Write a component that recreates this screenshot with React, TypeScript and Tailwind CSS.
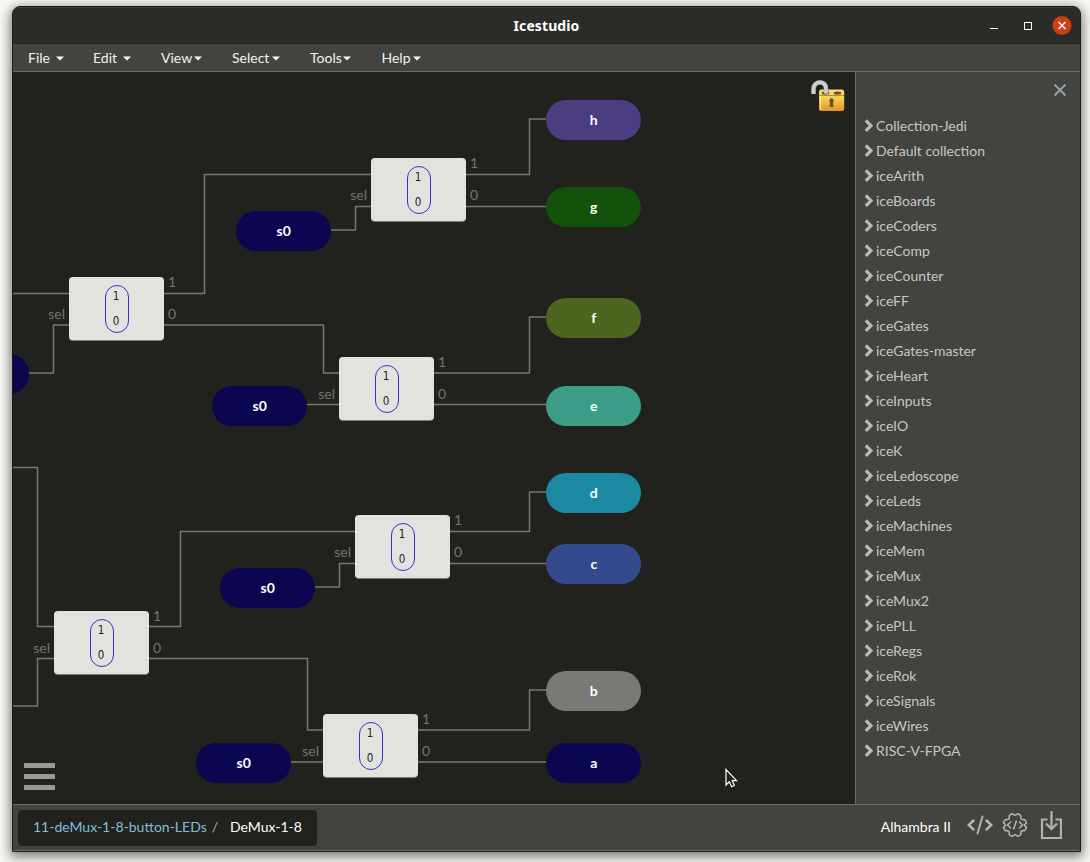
import React from 'react';

const menus = [
  { label: 'File', gap: 'gap-[6px]', width: 'w-[65px]' },
  { label: 'Edit', gap: 'gap-[6px]', width: 'w-[68px]' },
  { label: 'View', gap: 'gap-[2px]', width: 'w-[71px]' },
  { label: 'Select', gap: 'gap-[3px]', width: 'w-[78px]' },
  { label: 'Tools', gap: 'gap-[1px]', width: 'w-[71.5px]' },
  { label: 'Help', gap: 'gap-[2px]', width: 'w-[60px]' },
];

const collections = [
  'Collection-Jedi', 'Default collection', 'iceArith', 'iceBoards', 'iceCoders', 'iceComp', 'iceCounter',
  'iceFF', 'iceGates', 'iceGates-master', 'iceHeart', 'iceInputs', 'iceIO', 'iceK', 'iceLedoscope', 'iceLeds',
  'iceMachines', 'iceMem', 'iceMux', 'iceMux2', 'icePLL', 'iceRegs', 'iceRok', 'iceSignals', 'iceWires', 'RISC-V-FPGA',
];

const wires = [
  'M0 221.5H56',
  'M16 301H40.5V253H56',
  'M151 221.5H191.5V102.5H358',
  'M151 253H310.5V301H326',
  'M318 158H342.5V134.5H358',
  'M453 102.5H516.5V47H533',
  'M453 134.5H533',
  'M294 332.5H326',
  'M421 301H516.5V245H533',
  'M421 332.5H533',
  'M0 395.5H24.5V554.5H41',
  'M0 634H24.5V586.5H41',
  'M136 554.5H167.5V459.5H342',
  'M136 586.5H294.5V658H310',
  'M302 515H326.5V491.5H342',
  'M437 459.5H516.5V420H533',
  'M437 491.5H533',
  'M278 690H310',
  'M405 658H516.5V618H533',
  'M405 690H533',
];

const muxes = [
  { x: 358, y: 86 },
  { x: 56, y: 205 },
  { x: 326, y: 285 },
  { x: 342, y: 443 },
  { x: 41, y: 539 },
  { x: 310, y: 642 },
];

const labels = [
  { text: 'h', x: 533, y: 28, color: 'bg-[#4b3d80]' },
  { text: 'g', x: 533, y: 115, color: 'bg-[#12520b]' },
  { text: 'f', x: 533, y: 226, color: 'bg-[#4c6620]' },
  { text: 'e', x: 533, y: 314, color: 'bg-[#3b9d87]' },
  { text: 'd', x: 533, y: 401, color: 'bg-[#1a89a1]' },
  { text: 'c', x: 533, y: 472, color: 'bg-[#354a8c]' },
  { text: 'b', x: 533, y: 599, color: 'bg-[#797a75]' },
  { text: 'a', x: 533, y: 671, color: 'bg-[#0c0651]' },
  { text: 's0', x: 223, y: 139, color: 'bg-[#0c0651]' },
  { text: 's0', x: 199, y: 314, color: 'bg-[#0c0651]' },
  { text: 's0', x: 207, y: 496, color: 'bg-[#0c0651]' },
  { text: 's0', x: 183, y: 671, color: 'bg-[#0c0651]' },
  { text: '', x: -79, y: 282, color: 'bg-[#0c0651]' },
];

function Mux({ x, y }: { x: number; y: number }) {
  return (
    <div
      className="absolute flex h-[63px] w-[95px] items-center justify-center rounded-[4px] bg-[#e2e3df] shadow-[0_1px_0_#7c7d78]"
      style={{ left: x, top: y }}
    >
      <div className="flex h-[48px] w-[24px] flex-col items-center justify-between rounded-full border border-[#3c2ccb] pb-[4px] pr-[1px] pt-[4px] font-['DejaVu_Sans_Condensed','DejaVu_Sans',sans-serif] text-[11.5px] leading-[13px] text-[#20211d]">
        <span>1</span>
        <span>0</span>
      </div>
      <span className="absolute right-full top-[28px] mr-[4px] text-[14px] leading-[18px] text-[#74756f]">sel</span>
      <span className="absolute left-full top-[-4px] ml-[4px] text-[14px] leading-[18px] text-[#74756f]">1</span>
      <span className="absolute left-full top-[28px] ml-[4px] text-[14px] leading-[18px] text-[#74756f]">0</span>
    </div>
  );
}

function Padlock() {
  return (
    <svg width="36" height="36" viewBox="0 0 36 36">
      <defs>
        <linearGradient id="brass" x1="0" y1="0" x2="0" y2="1">
          <stop offset="0" stopColor="#f3e07a" />
          <stop offset=".45" stopColor="#f6cb48" />
          <stop offset="1" stopColor="#e2932f" />
        </linearGradient>
      </defs>
      <rect x="8" y="9.5" width="25.2" height="21.5" rx="2.5" fill="url(#brass)" />
      <path d="M8.5 15.5H33" stroke="#c08a28" strokeWidth="1" />
      <path d="M9.5 17v13" stroke="#fae58a" strokeWidth="1" />
      <ellipse cx="14.5" cy="13" rx="3.8" ry="1.5" fill="#6d4f1c" />
      <ellipse cx="26.5" cy="13" rx="3.8" ry="1.5" fill="#6d4f1c" />
      <path d="M2.5 14V9.5C2.500 5 5.200 2.400 9 2.400S15 5 15 9v4.500" fill="none" stroke="#8b8c87" strokeWidth="4.8" />
      <path d="M2.5 14V9.5C2.500 5 5.200 2.400 9 2.400S15 5 15 9v4.500" fill="none" stroke="#d0d1ce" strokeWidth="3.6" />
      <path d="M20.5 18.300a2.500 2.500 0 0 0-1.400 4.400l-.7 4.300h4.200l-.7-4.300a2.500 2.500 0 0 0-1.400-4.400z" fill="#725120" />
    </svg>
  );
}

function Gear() {
  return (
    <svg width="26" height="26" viewBox="0 0 26 26" fill="none" stroke="#b2b3af" strokeWidth="1.6" strokeLinejoin="round">
      <path d="M9.500 2C10.500 1 11.700 3.200 13 3.200S15.500 1 16.500 2l2 1.400c.8.6-.4 2.500.7 3.600s3.600.2 4 1.200l1.200 2.300c.5 1-2 1.500-2 2.500s2.500 1.700 2 2.700l-1.200 2.400c-.5 1-3 .1-4 1.200s.1 3-.7 3.600l-2 1.300c-1 .7-2.200-1.400-3.500-1.400S10.500 25 9.500 24.200l-2-1.300c-.8-.6.4-2.500-.7-3.600s-3.500-.2-4-1.200l-1.200-2.400c-.5-1 2-1.700 2-2.700s-2.500-1.500-2-2.500L2.800 8.200c.5-1 2.900-.1 4-1.200s-.1-3 .7-3.600z" />
      <path d="M9 9.500 5.500 13 9 16.500M17 9.500l3.500 3.500-3.500 3.500M14.500 8.500l-3 9" />
    </svg>
  );
}

export default function App() {
  return (
    <div className="flex h-[862px] w-[1090px] overflow-hidden bg-[#f8f8f6] pl-[12px] pt-[6px] font-['Lato',sans-serif]">
      <div className="flex h-[846px] w-[1069px] flex-col overflow-hidden rounded-t-[8px] border border-[#1d1e1a] bg-[#43443f] shadow-[0_3px_12px_2px_rgba(55,57,45,0.65)]">
        <header className="flex h-[37px] shrink-0 items-center border-b border-[#20211d] border-t border-t-[#3b3c37] bg-[#2b2c27]">
          <div className="w-[140px]" />
          <div className="flex-1 text-center font-['Noto_Sans',sans-serif] text-[14px] font-bold leading-[18px] tracking-[0.1px] text-white">
            Icestudio
          </div>
          <div className="flex w-[140px] items-center justify-end pr-[8px]">
            <svg width="84" height="20" viewBox="0 0 84 20" fill="none" className="-mt-[2px]">
              <path d="M2 13.500h8" stroke="#fff" />
              <rect x="36.5" y="7.5" width="7" height="7" stroke="#fff" />
              <circle cx="74" cy="10.500" r="9.500" fill="#d23c17" />
              <path d="m70.500 7 7 7m0-7-7 7" stroke="#fff" strokeWidth="1.500" />
            </svg>
          </div>
        </header>
        <nav className="flex h-[28px] shrink-0 items-center border-b border-[#6b6c67] pl-[15px] text-[14px] leading-[18px] text-[#f2f2f0]">
          {menus.map((menu) => (
            <div key={menu.label} className={`flex shrink-0 items-center ${menu.gap} ${menu.width}`}>
              <span>{menu.label}</span>
              <svg width="8" height="5" viewBox="0 0 8 5" className="mt-[2px] shrink-0">
                <path d="M0 .5h8L4 4.500z" fill="#fff" />
              </svg>
            </div>
          ))}
        </nav>
        <main className="flex h-[732px] shrink-0">
          <section className="relative w-[842px] shrink-0 overflow-hidden bg-[#21221d]">
            <svg width="842" height="732" className="absolute inset-0" fill="none" stroke="#777873" strokeWidth="1.5">
              {wires.map((d) => <path key={d} d={d} />)}
            </svg>
            {muxes.map((mux) => <Mux key={`${mux.x}-${mux.y}`} {...mux} />)}
            {labels.map((label) => (
              <div
                key={`${label.x}-${label.y}`}
                className={`absolute flex h-[39.5px] w-[95px] items-center justify-center rounded-full pl-[0.5px] pt-px text-[14px] font-bold leading-[18px] text-white ${label.color}`}
                style={{ left: label.x, top: label.y }}
              >
                {label.text}
              </div>
            ))}
            <div className="absolute left-[798px] top-[8px]"><Padlock /></div>
            <div className="absolute left-[11px] top-[691px] flex flex-col gap-[6px]">
              <div className="h-[5px] w-[31px] bg-[#989994]" />
              <div className="h-[5px] w-[31px] bg-[#989994]" />
              <div className="h-[5px] w-[31px] bg-[#989994]" />
            </div>
            <svg width="13" height="20" viewBox="0 0 13 20" className="absolute left-[712px] top-[696px]">
              <path d="M1 1.500v15.500l3.300-3.200 2.300 5 2.800-1.300L7.200 12.700h4.300z" fill="#20211d" stroke="#fff" strokeWidth="1.2" />
            </svg>
          </section>
          <aside className="flex flex-1 flex-col border-l border-[#6b6c67] text-[14px] text-[#c6c7c4]">
            <div className="flex h-[41px] shrink-0 justify-end pr-[13px] pt-[11px]">
              <svg width="14" height="14" viewBox="0 0 14 14" fill="none" stroke="#98a3a5" strokeWidth="1.9"><path d="m1.500 1.500 11 11m0-11-11 11" /></svg>
            </div>
            <ul>
              {collections.map((name) => (
                <li key={name} className="flex h-[25px] items-center gap-[2px] pl-[8px] leading-[18px]">
                  <svg width="10" height="13" viewBox="0 0 10 13" fill="none" stroke="#b9bab6" strokeWidth="3.2"><path d="m1.800 1.500 5.200 5.200-5.200 5.200" /></svg>
                  <span>{name}</span>
                </li>
              ))}
            </ul>
          </aside>
        </main>
        <footer className="flex h-[47px] shrink-0 items-center justify-between border-y border-[#6b6c67] pl-[5px] pr-[18px] text-[14px]">
          <div className="flex h-[36px] w-[299px] items-center rounded-[4px] bg-[#21221d] pb-[2px] pl-[15px] leading-[18px]">
            <span className="text-[#80bfdc]">11-deMux-1-8-button-LEDs</span>
            <span className="ml-[5px] text-[#b2b3af]">/</span>
            <span className="ml-[12px] text-white">DeMux-1-8</span>
          </div>
          <div className="flex items-center pb-[4px]">
            <span className="mr-[16px] mt-[2px] text-white">Alhambra II</span>
            <svg width="26" height="20" viewBox="0 0 26 20" fill="none" stroke="#b2b3af" strokeWidth="2.5" strokeLinecap="round" className="-mt-[2px]">
              <path d="M6.500 5.500 1.800 10l4.700 4.500M19.500 5.500l4.700 4.500-4.700 4.500" />
              <path d="m15.500 1.500-5 17" strokeWidth="2" />
            </svg>
            <div className="-mt-[2px] ml-[9px]"><Gear /></div>
            <svg width="22" height="29" viewBox="0 0 22 29" fill="none" stroke="#b2b3af" strokeWidth="2.2" className="ml-[12px]">
              <path d="M7.500 8.500H2v18.500h19V8.500h-5.500M11.500 0v17" /><path d="m6 12.500 5.500 5.500 5.500-5.500" />
            </svg>
          </div>
        </footer>
      </div>
    </div>
  );
}
